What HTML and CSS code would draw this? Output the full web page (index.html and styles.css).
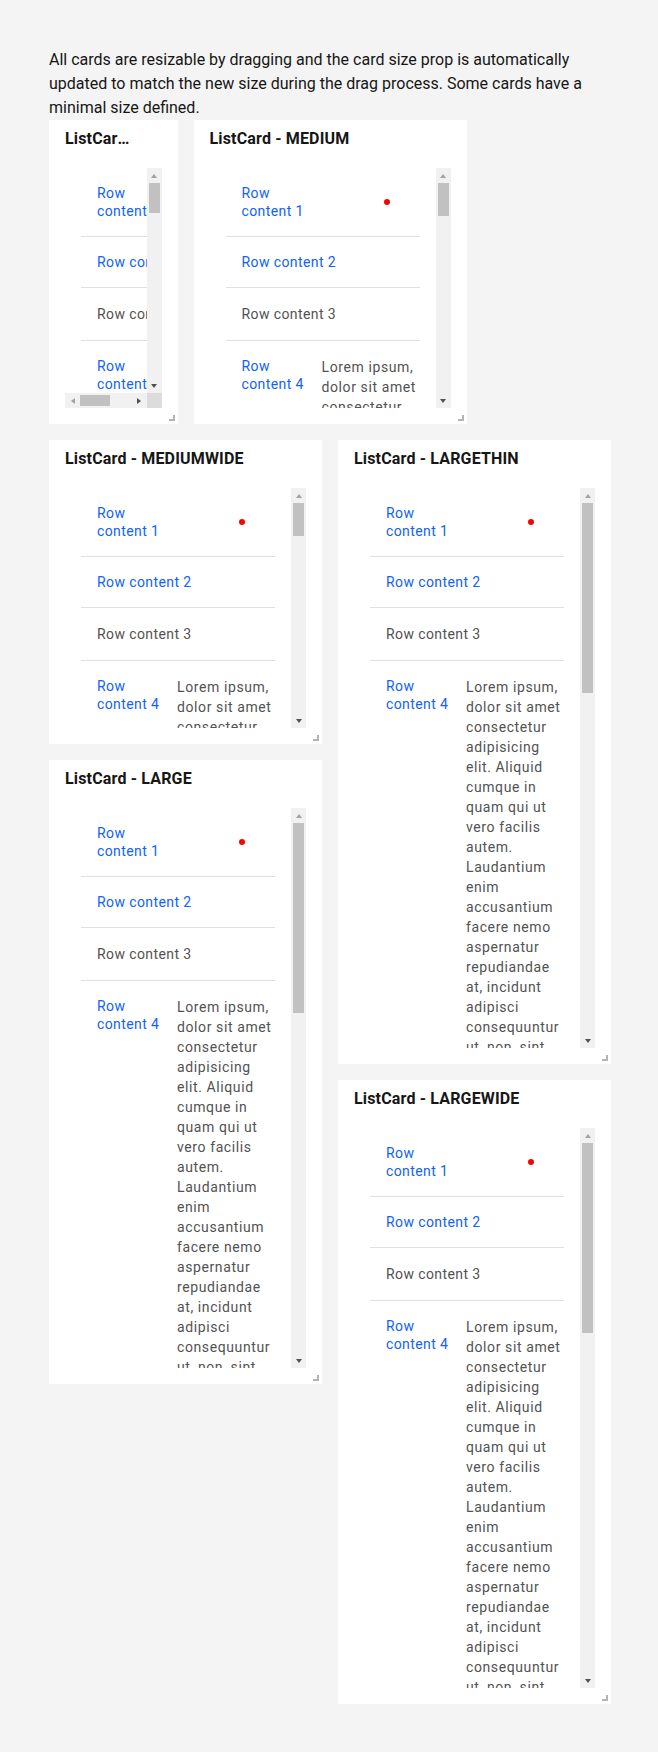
FILE: index.html
```html
<!DOCTYPE html>
<html lang="en">
<head>
<meta charset="utf-8">
<title>ListCard resizable</title>
<link rel="stylesheet" href="styles.css">
</head>
<body>
<div class="page">
  <p class="intro">All cards are resizable by dragging and the card size prop is automatically updated to match the new size during the drag process. Some cards have a minimal size defined.</p>
  <div class="grid">

    <section class="card card--small">
      <header class="card__header"><h3 class="card__title card__title--truncated">ListCard - SMALL</h3></header>
      <div class="card__content card__content--both">
        <div class="viewport">
          <ul class="list list--wide">
            <li class="list-item list-item--center"><span class="list-item__label list-item__label--fixed">Row content 1</span><span class="list-item__dot"></span></li>
            <li class="list-item"><span class="list-item__label">Row content 2</span></li>
            <li class="list-item"><span class="list-item__label list-item__label--plain">Row content 3</span></li>
            <li class="list-item"><span class="list-item__label list-item__label--fixed">Row content 4</span><span class="list-item__text">Lorem ipsum, dolor sit amet consectetur adipisicing elit. Aliquid cumque in quam qui ut vero facilis autem. Laudantium enim accusantium facere nemo aspernatur repudiandae at, incidunt adipisci consequuntur ut, non, sint magni quisquam praesentium voluptatem eligendi nesciunt.</span></li>
          </ul>
        </div>
        <div class="scrollbar scrollbar--v">
          <span class="scrollbar__btn"><span class="arrow arrow--up arrow--off"></span></span>
          <span class="scrollbar__track"><span class="scrollbar__thumb" style="height:30px"></span></span>
          <span class="scrollbar__btn"><span class="arrow arrow--down"></span></span>
        </div>
        <div class="scrollbar scrollbar--h">
          <span class="scrollbar__btn"><span class="arrow arrow--left arrow--off"></span></span>
          <span class="scrollbar__track"><span class="scrollbar__thumb" style="width:30px"></span></span>
          <span class="scrollbar__btn"><span class="arrow arrow--right"></span></span>
        </div>
        <div class="scrollbar__corner"></div>
      </div>
      <span class="card__resize"></span>
    </section>

    <section class="card card--medium">
      <header class="card__header"><h3 class="card__title">ListCard - MEDIUM</h3></header>
      <div class="card__content">
        <div class="viewport">
          <ul class="list">
            <li class="list-item list-item--center"><span class="list-item__label list-item__label--fixed">Row content 1</span><span class="list-item__dot"></span></li>
            <li class="list-item"><span class="list-item__label">Row content 2</span></li>
            <li class="list-item"><span class="list-item__label list-item__label--plain">Row content 3</span></li>
            <li class="list-item"><span class="list-item__label list-item__label--fixed">Row content 4</span><span class="list-item__text">Lorem ipsum, dolor sit amet consectetur adipisicing elit. Aliquid cumque in quam qui ut vero facilis autem. Laudantium enim accusantium facere nemo aspernatur repudiandae at, incidunt adipisci consequuntur ut, non, sint magni quisquam praesentium voluptatem eligendi nesciunt.</span></li>
          </ul>
        </div>
        <div class="scrollbar scrollbar--v">
          <span class="scrollbar__btn"><span class="arrow arrow--up arrow--off"></span></span>
          <span class="scrollbar__track"><span class="scrollbar__thumb" style="height:33px"></span></span>
          <span class="scrollbar__btn"><span class="arrow arrow--down"></span></span>
        </div>
      </div>
      <span class="card__resize"></span>
    </section>

    <section class="card card--mediumwide">
      <header class="card__header"><h3 class="card__title">ListCard - MEDIUMWIDE</h3></header>
      <div class="card__content">
        <div class="viewport">
          <ul class="list">
            <li class="list-item list-item--center"><span class="list-item__label list-item__label--fixed">Row content 1</span><span class="list-item__dot"></span></li>
            <li class="list-item"><span class="list-item__label">Row content 2</span></li>
            <li class="list-item"><span class="list-item__label list-item__label--plain">Row content 3</span></li>
            <li class="list-item"><span class="list-item__label list-item__label--fixed">Row content 4</span><span class="list-item__text">Lorem ipsum, dolor sit amet consectetur adipisicing elit. Aliquid cumque in quam qui ut vero facilis autem. Laudantium enim accusantium facere nemo aspernatur repudiandae at, incidunt adipisci consequuntur ut, non, sint magni quisquam praesentium voluptatem eligendi nesciunt.</span></li>
          </ul>
        </div>
        <div class="scrollbar scrollbar--v">
          <span class="scrollbar__btn"><span class="arrow arrow--up arrow--off"></span></span>
          <span class="scrollbar__track"><span class="scrollbar__thumb" style="height:33px"></span></span>
          <span class="scrollbar__btn"><span class="arrow arrow--down"></span></span>
        </div>
      </div>
      <span class="card__resize"></span>
    </section>

    <section class="card card--largethin">
      <header class="card__header"><h3 class="card__title">ListCard - LARGETHIN</h3></header>
      <div class="card__content">
        <div class="viewport">
          <ul class="list">
            <li class="list-item list-item--center"><span class="list-item__label list-item__label--fixed">Row content 1</span><span class="list-item__dot"></span></li>
            <li class="list-item"><span class="list-item__label">Row content 2</span></li>
            <li class="list-item"><span class="list-item__label list-item__label--plain">Row content 3</span></li>
            <li class="list-item"><span class="list-item__label list-item__label--fixed">Row content 4</span><span class="list-item__text">Lorem ipsum, dolor sit amet consectetur adipisicing elit. Aliquid cumque in quam qui ut vero facilis autem. Laudantium enim accusantium facere nemo aspernatur repudiandae at, incidunt adipisci consequuntur ut, non, sint magni quisquam praesentium voluptatem eligendi nesciunt.</span></li>
          </ul>
        </div>
        <div class="scrollbar scrollbar--v">
          <span class="scrollbar__btn"><span class="arrow arrow--up arrow--off"></span></span>
          <span class="scrollbar__track"><span class="scrollbar__thumb" style="height:190px"></span></span>
          <span class="scrollbar__btn"><span class="arrow arrow--down"></span></span>
        </div>
      </div>
      <span class="card__resize"></span>
    </section>

    <section class="card card--large">
      <header class="card__header"><h3 class="card__title">ListCard - LARGE</h3></header>
      <div class="card__content">
        <div class="viewport">
          <ul class="list">
            <li class="list-item list-item--center"><span class="list-item__label list-item__label--fixed">Row content 1</span><span class="list-item__dot"></span></li>
            <li class="list-item"><span class="list-item__label">Row content 2</span></li>
            <li class="list-item"><span class="list-item__label list-item__label--plain">Row content 3</span></li>
            <li class="list-item"><span class="list-item__label list-item__label--fixed">Row content 4</span><span class="list-item__text">Lorem ipsum, dolor sit amet consectetur adipisicing elit. Aliquid cumque in quam qui ut vero facilis autem. Laudantium enim accusantium facere nemo aspernatur repudiandae at, incidunt adipisci consequuntur ut, non, sint magni quisquam praesentium voluptatem eligendi nesciunt.</span></li>
          </ul>
        </div>
        <div class="scrollbar scrollbar--v">
          <span class="scrollbar__btn"><span class="arrow arrow--up arrow--off"></span></span>
          <span class="scrollbar__track"><span class="scrollbar__thumb" style="height:190px"></span></span>
          <span class="scrollbar__btn"><span class="arrow arrow--down"></span></span>
        </div>
      </div>
      <span class="card__resize"></span>
    </section>

    <section class="card card--largewide">
      <header class="card__header"><h3 class="card__title">ListCard - LARGEWIDE</h3></header>
      <div class="card__content">
        <div class="viewport">
          <ul class="list">
            <li class="list-item list-item--center"><span class="list-item__label list-item__label--fixed">Row content 1</span><span class="list-item__dot"></span></li>
            <li class="list-item"><span class="list-item__label">Row content 2</span></li>
            <li class="list-item"><span class="list-item__label list-item__label--plain">Row content 3</span></li>
            <li class="list-item"><span class="list-item__label list-item__label--fixed">Row content 4</span><span class="list-item__text">Lorem ipsum, dolor sit amet consectetur adipisicing elit. Aliquid cumque in quam qui ut vero facilis autem. Laudantium enim accusantium facere nemo aspernatur repudiandae at, incidunt adipisci consequuntur ut, non, sint magni quisquam praesentium voluptatem eligendi nesciunt.</span></li>
          </ul>
        </div>
        <div class="scrollbar scrollbar--v">
          <span class="scrollbar__btn"><span class="arrow arrow--up arrow--off"></span></span>
          <span class="scrollbar__track"><span class="scrollbar__thumb" style="height:190px"></span></span>
          <span class="scrollbar__btn"><span class="arrow arrow--down"></span></span>
        </div>
      </div>
      <span class="card__resize"></span>
    </section>

  </div>
</div>
</body>
</html>
```

FILE: styles.css
```css
html, body {
  margin: 0;
  padding: 0;
  background: #f4f4f4;
}

body {
  font-family: Roboto, "Liberation Sans", sans-serif;
  color: #161616;
}

.page {
  padding: 48px 47px 48px 49px;
}

.intro {
  margin: 0;
  width: 562px;
  font-size: 16px;
  line-height: 24px;
  color: #161616;
}

.grid {
  display: grid;
  width: 562px;
  grid-template-columns: repeat(4, 1fr);
  grid-auto-rows: 304px;
  gap: 16px;
}

.card {
  position: relative;
  display: flex;
  flex-direction: column;
  min-height: 0;
  min-width: 0;
  background: #ffffff;
}

.card--small { grid-column: 1 / span 1; grid-row: 1 / span 1; }
.card--medium { grid-column: 2 / span 2; grid-row: 1 / span 1; }
.card--mediumwide { grid-column: 1 / span 2; grid-row: 2 / span 1; }
.card--largethin { grid-column: 3 / span 2; grid-row: 2 / span 2; }
.card--large { grid-column: 1 / span 2; grid-row: 3 / span 2; }
.card--largewide { grid-column: 3 / span 2; grid-row: 4 / span 2; }

.card__header {
  flex: 0 0 48px;
  box-sizing: border-box;
  padding: 8px 16px 0;
}

.card__title {
  margin: 0;
  font-size: 16px;
  line-height: 22px;
  font-weight: 700;
  letter-spacing: 0.16px;
  color: #161616;
  white-space: nowrap;
  overflow: hidden;
  text-overflow: ellipsis;
}

.card__title--truncated {
  max-width: 69px;
}

.card__content {
  flex: 1 1 auto;
  min-height: 0;
  margin: 0 16px 16px;
  display: grid;
  grid-template-columns: minmax(0, 1fr) 15px;
  grid-template-rows: minmax(0, 1fr);
}

.card__content--both {
  grid-template-rows: minmax(0, 1fr) 15px;
}

.viewport {
  min-width: 0;
  min-height: 0;
  overflow: hidden;
}

.card__resize {
  position: absolute;
  right: 3px;
  bottom: 3px;
  width: 6px;
  height: 6px;
  box-sizing: border-box;
  border-right: 2px solid #b4b4b4;
  border-bottom: 2px solid #b4b4b4;
}

/* Classic scrollbars */
.scrollbar {
  display: flex;
  background: #f1f1f1;
  min-height: 0;
  min-width: 0;
}

.scrollbar--v {
  flex-direction: column;
}

.scrollbar--h {
  flex-direction: row;
}

.scrollbar__btn {
  flex: 0 0 15px;
  width: 15px;
  height: 15px;
  display: flex;
  align-items: center;
  justify-content: center;
}

.scrollbar__track {
  flex: 1 1 auto;
  display: flex;
  min-height: 0;
  min-width: 0;
}

.scrollbar--v .scrollbar__track {
  flex-direction: column;
  align-items: center;
}

.scrollbar--h .scrollbar__track {
  flex-direction: row;
  align-items: center;
}

.scrollbar--v .scrollbar__thumb {
  width: 11px;
  background: #c1c1c1;
}

.scrollbar--h .scrollbar__thumb {
  height: 11px;
  background: #c1c1c1;
}

.scrollbar__corner {
  background: #dcdcdc;
}

.arrow {
  width: 0;
  height: 0;
  border-style: solid;
  border-color: transparent;
}

.arrow--up {
  border-width: 0 3.5px 4px 3.5px;
  border-bottom-color: #505050;
}

.arrow--down {
  border-width: 4px 3.5px 0 3.5px;
  border-top-color: #505050;
}

.arrow--left {
  border-width: 3.5px 4px 3.5px 0;
  border-right-color: #505050;
}

.arrow--right {
  border-width: 3.5px 0 3.5px 4px;
  border-left-color: #505050;
}

.arrow--up.arrow--off { border-bottom-color: #a3a3a3; }
.arrow--left.arrow--off { border-right-color: #a3a3a3; }

/* List */
.list {
  list-style: none;
  margin: 0;
  padding: 0;
}

.list--wide {
  width: 152px;
}

.list-item {
  display: flex;
  align-items: flex-start;
  margin: 0 16px;
  padding: 16px 0 16px 16px;
  border-bottom: 1px solid #e0e0e0;
}

.list-item--center {
  align-items: center;
}

.list-item__label {
  font-size: 14px;
  line-height: 18px;
  letter-spacing: 0.4px;
  color: #0f62fe;
  white-space: nowrap;
}

.list-item__label--fixed {
  flex: 0 0 64px;
  margin-right: 16px;
  white-space: normal;
}

.list-item__label--plain {
  line-height: 20px;
  color: #525252;
}

.list-item__dot {
  flex: 0 0 6px;
  width: 6px;
  height: 6px;
  margin-left: auto;
  margin-right: 30px;
  border-radius: 50%;
  background: #ff0000;
}

.list-item__text {
  flex: 0 0 96px;
  width: 96px;
  font-size: 14px;
  line-height: 20px;
  letter-spacing: 0.6px;
  color: #525252;
}
```
